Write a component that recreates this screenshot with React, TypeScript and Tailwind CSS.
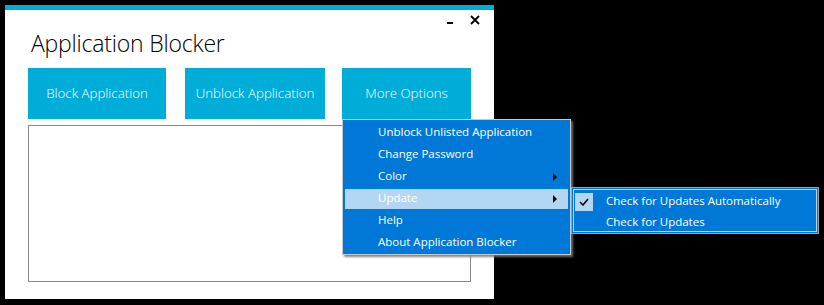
import React from 'react';

const font = { fontFamily: '"Open Sans", "Noto Sans", sans-serif' };

const Arrow = () => (
    <svg width="5" height="8" viewBox="0 0 5 8" className="absolute right-[10px] top-1/2 -translate-y-1/2">
        <path d="M0 0 L4 4 L0 8 Z" fill="#000" />
    </svg>
);

const menuItems = [
    { label: 'Unblock Unlisted Application' },
    { label: 'Change Password' },
    { label: 'Color', sub: true },
    { label: 'Update', sub: true, active: true },
    { label: 'Help' },
    { label: 'About Application Blocker' },
];

const App: React.FC = () => {
    return (
        <div className="relative w-[824px] h-[305px] bg-black p-[5px]" style={font}>
            {/* window */}
            <div className="w-[489px] h-[294px] bg-white border-t-[5px] border-[#00acd8] flex flex-col pl-[23px]">
                <div className="relative h-[18px]">
                    <div className="absolute right-[41px] top-[12px] w-[6px] h-[2px] bg-black" />
                    <svg width="10" height="10" viewBox="0 0 10 10" className="absolute right-[14px] top-[5px]">
                        <path d="M1 1 L9 9 M9 1 L1 9" stroke="#000" strokeWidth="1.8" />
                    </svg>
                </div>
                <h1 className="text-[23px] font-light text-black leading-[30px] h-[40px] pl-[3px] tracking-[-0.2px]">Application Blocker</h1>
                <div className="flex gap-[19px] h-[51px]">
                    <div className="w-[138px] bg-[#00acd8] flex items-center justify-center text-white text-[13.3px] font-light">Block Application</div>
                    <div className="w-[140px] bg-[#00acd8] flex items-center justify-center text-white text-[13.3px] font-light">Unblock Application</div>
                    <div className="w-[129px] ml-[-2px] bg-[#00acd8] flex items-center justify-center text-white text-[13.3px] font-light">More Options</div>
                </div>
                <div className="mt-[6px] w-[443px] h-[157px] border border-[#8a8a8a]" />
            </div>

            {/* context menu */}
            <div className="absolute left-[342px] top-[119px] w-[229px] h-[136px] border border-[#c8c8c8] bg-[#0078d7] py-px px-[2px] shadow-[2px_2px_2px_rgba(120,120,120,0.9)]">
                {menuItems.map(item => (
                    <div key={item.label} className="relative h-[22px] py-[2px]">
                        <div className={`relative h-[20px] flex items-center pl-[33px] pb-[2px] text-[11.5px] ${item.active ? 'bg-[#b3d7f3] text-white' : 'text-white'}`}>
                            {item.label}
                            {item.sub && <Arrow />}
                        </div>
                    </div>
                ))}
            </div>

            {/* submenu */}
            <div className="absolute left-[571px] top-[187px] w-[248px] h-[47px] border border-[#a0a0a0] bg-[#0078d7] p-px">
                <div className="h-full border border-white/70 py-px">
                    <div className="relative h-[22px] flex items-center pl-[32px] pb-[3px] text-white text-[11.5px]">
                        <div className="absolute left-[1px] top-[2px] w-[18px] h-[18px] bg-[#b3d7f3] flex items-center justify-center">
                            <svg width="10" height="8" viewBox="0 0 10 8">
                                <path d="M1 4 L4 7 L9 1" stroke="#000" strokeWidth="1.5" fill="none" />
                            </svg>
                        </div>
                        Check for Updates Automatically
                    </div>
                    <div className="h-[21px] flex items-center pl-[32px] pb-[3px] text-white text-[11.5px]">Check for Updates</div>
                </div>
            </div>
        </div>
    );
};

export default App;
